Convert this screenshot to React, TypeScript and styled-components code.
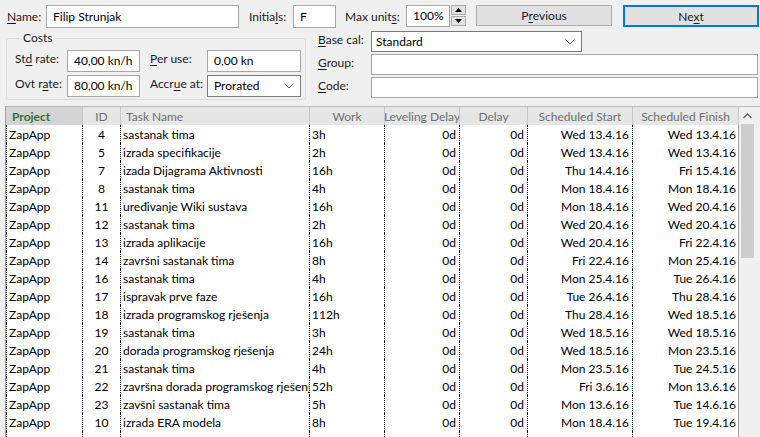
import React from 'react';
import styled, { createGlobalStyle } from 'styled-components';

const Global = createGlobalStyle`
  html, body { margin: 0; padding: 0; background: #f0f0f0; }
  body {
    font-family: Lato, "Noto Sans", "Liberation Sans", sans-serif;
    font-size: 12px;
    color: #000;
  }
  #root { width: 760px; height: 437px; overflow: hidden; }
`;

const Page = styled.div`
  display: flex;
  flex-direction: column;
  width: 760px;
  height: 437px;
  background: #f0f0f0;
`;

const TopRow = styled.div`
  display: flex;
  align-items: flex-start;
  padding: 5px 0 0 7px;
  height: 23px;
`;

const FieldLabel = styled.div<{ $w: number; $ml?: number; $dy?: number }>`
  width: ${p => p.$w}px;
  margin-left: ${p => p.$ml ?? 0}px;
  flex: none;
  line-height: 15px;
  padding-top: ${p => p.$dy ?? 4}px;
  color: #1a1a1a;
  white-space: nowrap;
  u { text-decoration-thickness: 1px; text-underline-offset: 2px; }
`;

const TextBox = styled.div<{ $w: number; $h?: number; $ml?: number }>`
  box-sizing: border-box;
  width: ${p => p.$w}px;
  height: ${p => p.$h ?? 22}px;
  margin-left: ${p => p.$ml ?? 0}px;
  flex: none;
  background: #fff;
  border: 1px solid #a6a6a6;
  padding: 0 6px;
  line-height: ${p => (p.$h ?? 22) - 2}px;
  white-space: nowrap;
  overflow: hidden;
`;

const Spinner = styled.div`
  display: flex;
  flex-direction: column;
  gap: 1px;
  margin-left: 1px;
  width: 15px;
  flex: none;
`;

const SpinButton = styled.div`
  box-sizing: border-box;
  height: 10px;
  background: #e1e1e1;
  border: 1px solid #adadad;
  display: flex;
  align-items: center;
  justify-content: center;
`;

const Button = styled.div<{ $primary?: boolean; $ml: number }>`
  box-sizing: border-box;
  flex: none;
  width: 136px;
  height: ${p => (p.$primary ? 22 : 21)}px;
  margin-left: ${p => p.$ml}px;
  background: #e1e1e1;
  border: ${p => (p.$primary ? '2px solid #0078d7' : '1px solid #adadad')};
  display: flex;
  align-items: center;
  justify-content: center;
  color: #1a1a1a;
  u { text-decoration-thickness: 1px; text-underline-offset: 2px; }
`;

const SecondRow = styled.div`
  display: flex;
  align-items: flex-start;
  padding-left: 6px;
  margin-top: 3px;
`;

const Group = styled.fieldset`
  box-sizing: border-box;
  width: 300px;
  height: 69px;
  margin: 0;
  padding: 5px 4px 2px 8px;
  border: 1px solid #dcdcdc;
  border-radius: 2px;
`;

const Legend = styled.legend`
  padding: 0 3px;
  margin-left: 5px;
  line-height: 14px;
  color: #1a1a1a;
`;

const CostsGrid = styled.div`
  display: grid;
  grid-template-columns: 52px 73px 67px 94px;
  grid-auto-rows: 22px;
  row-gap: 3px;
`;

const GridLabel = styled.div<{ $indent?: number }>`
  padding-left: ${p => p.$indent ?? 0}px;
  line-height: 15px;
  padding-top: 1px;
  color: #1a1a1a;
  white-space: nowrap;
  u { text-decoration-thickness: 1px; text-underline-offset: 2px; }
`;

const GridBox = styled.div<{ $w?: number }>`
  box-sizing: border-box;
  width: ${p => (p.$w ? `${p.$w}px` : '100%')};
  background: #fff;
  border: 1px solid #a6a6a6;
  padding: 0 6px;
  line-height: 20px;
  white-space: nowrap;
  overflow: hidden;
  display: flex;
  align-items: center;
  justify-content: space-between;
`;

const SelectBox = styled(GridBox)<{ $pl?: number }>`
  border-color: #7a7a7a;
  padding: 0 6px 0 ${p => p.$pl ?? 6}px;
`;

const RightGrid = styled.div`
  margin-left: 12px;
  display: grid;
  grid-template-columns: 53px 387px;
  grid-auto-rows: 21px;
  row-gap: 2px;
`;

const Sheet = styled.div`
  margin: 6px 0 0 5px;
  flex: 1;
  display: flex;
  border-top: 1px solid #b9b9b9;
  border-left: 1px solid #a0a0a0;
  overflow: hidden;
`;

const TableArea = styled.div`
  width: 733px;
  flex: none;
  display: flex;
  flex-direction: column;
  background: #fff;
`;

const COLS = '77px 38px 189px 75px 75px 68px 105px 106px';

const HeaderRow = styled.div`
  display: grid;
  grid-template-columns: ${COLS};
  height: 18px;
  flex: none;
  background: #e6e6e6;
`;

type Align = 'left' | 'center' | 'right';

const justify = (a: Align) => (a === 'left' ? 'flex-start' : a === 'right' ? 'flex-end' : 'center');

const HeaderCell = styled.div<{ $align: Align; $selected?: boolean; $pl?: number }>`
  box-sizing: border-box;
  display: flex;
  align-items: center;
  justify-content: ${p => justify(p.$align)};
  padding-left: ${p => p.$pl ?? 0}px;
  overflow: hidden;
  white-space: nowrap;
  border-right: 1px solid #c8c8c8;
  background: ${p => (p.$selected ? '#d4d4d4' : 'transparent')};
  color: ${p => (p.$selected ? '#2f7332' : '#6f6f6f')};
  font-weight: ${p => (p.$selected ? 700 : 400)};
`;

const Row = styled.div`
  display: grid;
  grid-template-columns: ${COLS};
  height: 18px;
  flex: none;
`;

const Cell = styled.div<{ $align: Align; $first?: boolean; $last?: boolean }>`
  box-sizing: border-box;
  display: flex;
  align-items: center;
  justify-content: ${p => justify(p.$align)};
  padding: 0 ${p => (p.$align === 'right' ? (p.$last ? 2 : 3) : 0)}px 0
    ${p => (p.$align === 'left' ? 2 : 0)}px;
  overflow: hidden;
  white-space: nowrap;
  border-left: ${p => (p.$first ? '1px dotted #000' : 'none')};
  border-right: ${p => (p.$last ? '1px solid #a0a0a0' : '1px dotted #000')};
`;

const ScrollBar = styled.div`
  flex: 1;
  display: flex;
  flex-direction: column;
  background: #f0f0f0;
`;

const ScrollUp = styled.div`
  width: 17px;
  height: 17px;
  display: flex;
  align-items: center;
  justify-content: center;
`;

const Thumb = styled.div`
  width: 13px;
  height: 134px;
  margin-left: 2px;
  background: #cdcdcd;
`;

const Chevron = () => (
  <svg width="10" height="6" viewBox="0 0 10 6">
    <path d="M0.5 0.5 L5 5 L9.5 0.5" fill="none" stroke="#606060" strokeWidth="1" />
  </svg>
);

const Tri = ({ up }: { up: boolean }) => (
  <svg width="7" height="4" viewBox="0 0 7 4">
    <path d={up ? 'M0 4 L3.5 0 L7 4 Z' : 'M0 0 L3.5 4 L7 0 Z'} fill="#000" />
  </svg>
);

type Task = [number, string, string, string, string];

const tasks: Task[] = [
  [4, 'sastanak tima', '3h', 'Wed 13.4.16', 'Wed 13.4.16'],
  [5, 'izrada specifikacije', '2h', 'Wed 13.4.16', 'Wed 13.4.16'],
  [7, 'izada Dijagrama Aktivnosti', '16h', 'Thu 14.4.16', 'Fri 15.4.16'],
  [8, 'sastanak tima', '4h', 'Mon 18.4.16', 'Mon 18.4.16'],
  [11, 'uređivanje Wiki sustava', '16h', 'Mon 18.4.16', 'Wed 20.4.16'],
  [12, 'sastanak tima', '2h', 'Wed 20.4.16', 'Wed 20.4.16'],
  [13, 'izrada aplikacije', '16h', 'Wed 20.4.16', 'Fri 22.4.16'],
  [14, 'završni sastanak tima', '8h', 'Fri 22.4.16', 'Mon 25.4.16'],
  [16, 'sastanak tima', '4h', 'Mon 25.4.16', 'Tue 26.4.16'],
  [17, 'ispravak prve faze', '16h', 'Tue 26.4.16', 'Thu 28.4.16'],
  [18, 'izrada programskog rješenja', '112h', 'Thu 28.4.16', 'Wed 18.5.16'],
  [19, 'sastanak tima', '3h', 'Wed 18.5.16', 'Wed 18.5.16'],
  [20, 'dorada programskog rješenja', '24h', 'Wed 18.5.16', 'Mon 23.5.16'],
  [21, 'sastanak tima', '4h', 'Mon 23.5.16', 'Tue 24.5.16'],
  [22, 'završna dorada programskog rješenja', '52h', 'Fri 3.6.16', 'Mon 13.6.16'],
  [23, 'zavšni sastanak tima', '5h', 'Mon 13.6.16', 'Tue 14.6.16'],
  [10, 'izrada ERA modela', '8h', 'Mon 18.4.16', 'Tue 19.4.16'],
];

const headers: { label: string; align: Align; pl?: number; selected?: boolean }[] = [
  { label: 'Project', align: 'left', pl: 6, selected: true },
  { label: 'ID', align: 'center' },
  { label: 'Task Name', align: 'left', pl: 5 },
  { label: 'Work', align: 'center' },
  { label: 'Leveling Delay', align: 'center' },
  { label: 'Delay', align: 'center' },
  { label: 'Scheduled Start', align: 'center' },
  { label: 'Scheduled Finish', align: 'center' },
];

export default function App() {
  return (
    <Page>
      <Global />
      <TopRow>
        <FieldLabel $w={39}><u>N</u>ame:</FieldLabel>
        <TextBox $w={193} $h={23}>Filip Strunjak</TextBox>
        <FieldLabel $w={44} $ml={10}>Initia<u>l</u>s:</FieldLabel>
        <TextBox $w={43} $h={23}>F</TextBox>
        <FieldLabel $w={61} $ml={9}>Max unit<u>s</u>:</FieldLabel>
        <TextBox $w={44} $h={22}>100%</TextBox>
        <Spinner>
          <SpinButton><Tri up /></SpinButton>
          <SpinButton><Tri up={false} /></SpinButton>
        </Spinner>
        <Button $ml={10}>P<u>r</u>evious</Button>
        <Button $ml={11} $primary>Ne<u>x</u>t</Button>
      </TopRow>
      <SecondRow>
        <Group>
          <Legend>Costs</Legend>
          <CostsGrid>
            <GridLabel>St<u>d</u> rate:</GridLabel>
            <GridBox>40,00 kn/h</GridBox>
            <GridLabel $indent={10}><u>P</u>er use:</GridLabel>
            <GridBox>0,00 kn</GridBox>
            <GridLabel>Ovt r<u>a</u>te:</GridLabel>
            <GridBox>80,00 kn/h</GridBox>
            <GridLabel $indent={10}>Accr<u>u</u>e at:</GridLabel>
            <SelectBox>
              <span>Prorated</span>
              <Chevron />
            </SelectBox>
          </CostsGrid>
        </Group>
        <RightGrid>
          <GridLabel><u>B</u>ase cal:</GridLabel>
          <SelectBox $w={211} $pl={4}>
            <span>Standard</span>
            <Chevron />
          </SelectBox>
          <GridLabel><u>G</u>roup:</GridLabel>
          <GridBox />
          <GridLabel><u>C</u>ode:</GridLabel>
          <GridBox />
        </RightGrid>
      </SecondRow>
      <Sheet>
        <TableArea>
          <HeaderRow>
            {headers.map(h => (
              <HeaderCell key={h.label} $align={h.align} $pl={h.pl} $selected={h.selected}>
                {h.label}
              </HeaderCell>
            ))}
          </HeaderRow>
          {tasks.map(t => (
            <Row key={t[0]}>
              <Cell $align="left" $first>ZapApp</Cell>
              <Cell $align="center">{t[0]}</Cell>
              <Cell $align="left">{t[1]}</Cell>
              <Cell $align="left">{t[2]}</Cell>
              <Cell $align="right">0d</Cell>
              <Cell $align="right">0d</Cell>
              <Cell $align="right">{t[3]}</Cell>
              <Cell $align="right" $last>{t[4]}</Cell>
            </Row>
          ))}
          <Row>
            <Cell $align="left" $first />
            <Cell $align="center" />
            <Cell $align="left" />
            <Cell $align="left" />
            <Cell $align="right" />
            <Cell $align="right" />
            <Cell $align="right" />
            <Cell $align="right" $last />
          </Row>
        </TableArea>
        <ScrollBar>
          <ScrollUp>
            <svg width="9" height="6" viewBox="0 0 9 6">
              <path d="M0.5 5 L4.5 1 L8.5 5" fill="none" stroke="#606060" strokeWidth="1.4" />
            </svg>
          </ScrollUp>
          <Thumb />
        </ScrollBar>
      </Sheet>
    </Page>
  );
}
